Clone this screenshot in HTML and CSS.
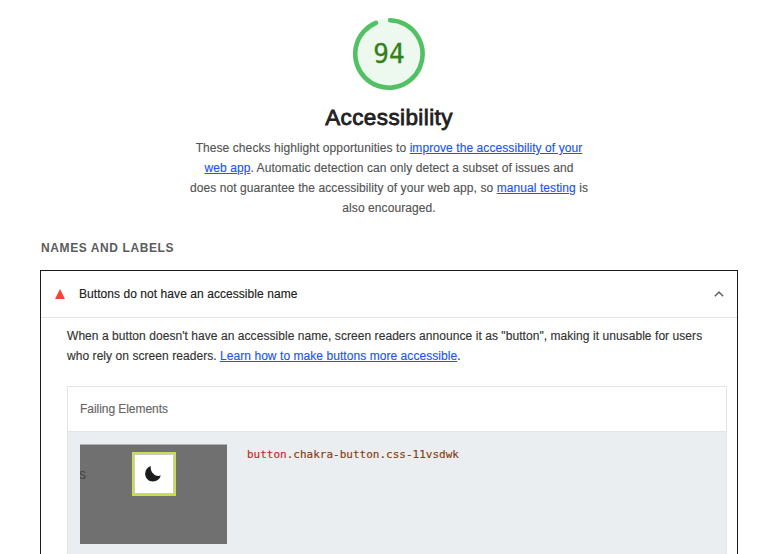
FILE: index.html
```html
<!DOCTYPE html>
<html lang="en">
<head>
<meta charset="utf-8">
<title>Accessibility</title>
<link rel="stylesheet" href="styles.css">
</head>
<body>
<main class="report">
  <header class="category">
    <div class="gauge">
      <svg class="gauge-ring" viewBox="0 0 72 72">
        <circle cx="36" cy="36" r="36" fill="#edf8ef"/>
        <path d="M37.2 2.3A33.7 33.7 0 1 1 22.9 4.9" fill="none" stroke="#51c164" stroke-width="4.6" stroke-linecap="round"/>
      </svg>
      <span class="score">94</span>
    </div>
    <h1 class="title">Accessibility</h1>
    <p class="description">These checks highlight opportunities to <a href="#">improve the accessibility of your<br>web app</a>. Automatic detection can only detect a subset of issues and<br>does not guarantee the accessibility of your web app, so <a href="#">manual testing</a> is<br>also encouraged.</p>
  </header>
  <h2 class="group-title">NAMES AND LABELS</h2>
  <section class="audit">
    <div class="audit-header">
      <svg class="fail-icon" viewBox="0 0 10 10"><path d="M5 0L10 10H0Z" fill="#f14537"/></svg>
      <span class="audit-name">Buttons do not have an accessible name</span>
      <svg class="chevron" viewBox="0 0 10 6"><path d="M.8 5.2L5 1.1L9.2 5.2" fill="none" stroke="#666" stroke-width="1.5"/></svg>
    </div>
    <p class="audit-text">When a button doesn't have an accessible name, screen readers announce it as "button", making it unusable for users<br>who rely on screen readers. <a href="#">Learn how to make buttons more accessible</a>.</p>
    <div class="table">
      <div class="table-head">Failing Elements</div>
      <div class="table-row">
        <div class="thumb">
          <span class="thumb-text">s</span>
          <div class="thumb-target">
            <svg class="moon" viewBox="0 0 16 16"><path d="M5.8 0A8 8 0 0 0 .2 8.5C.7 12.8 4 15.6 8 15.5C11.7 15.4 14.8 13.2 15.8 9.6C12.8 10.6 10.4 9.8 8.4 7.8C6.3 5.7 5.3 2.8 5.8 0Z" fill="#1c1c1c"/></svg>
          </div>
        </div>
        <code class="node"><span class="tag">button</span>.chakra-button.css-11vsdwk</code>
      </div>
    </div>
  </section>
</main>
</body>
</html>
```
FILE: styles.css
```css
* { box-sizing: border-box; }
body {
  margin: 0;
  background: #fff;
  color: #212121;
  font: 12px/20px "Liberation Sans", Arial, sans-serif;
}
a { color: #1a56f0; text-decoration: underline; }
.report { width: 698px; margin-left: 40px; padding-top: 18px; }
.category { display: flex; flex-direction: column; align-items: center; }
.gauge { display: grid; width: 72px; height: 72px; place-items: center; }
.gauge-ring, .score { grid-area: 1 / 1; }
.gauge-ring { width: 72px; height: 72px; }
.score {
  color: #34811b;
  font: 26px/72px "DejaVu Sans Mono", monospace;
  -webkit-text-stroke: 0.3px #34811b;
}
.title {
  margin: 13px 0 0;
  font-size: 22.5px;
  font-weight: 400;
  line-height: 30px;
  letter-spacing: 0.4px;
  white-space: nowrap;
  -webkit-text-stroke: 0.8px #212121;
}
.description {
  margin: 5px 0 0;
  color: #555;
  letter-spacing: 0.08px;
  text-align: center;
  white-space: nowrap;
  -webkit-text-stroke: 0.15px;
}
.group-title {
  margin: 20px 0 0 1px;
  color: #5c5c5c;
  font-size: 12px;
  line-height: 20px;
  letter-spacing: 0.6px;
}
.audit { height: 284px; margin-top: 12px; border: 1px solid #1b1b1b; border-bottom: 0; }
.audit-header {
  display: flex;
  align-items: center;
  height: 47px;
  padding: 0 13px 0 14px;
  border-bottom: 1px solid #e4e4e4;
}
.fail-icon { width: 10px; height: 10px; }
.audit-name { margin-left: 14px; letter-spacing: 0.06px; white-space: nowrap; -webkit-text-stroke: 0.15px; }
.chevron { width: 10px; height: 6px; margin: -1px 0 0 auto; }
.audit-text {
  margin: 8px 0 0 26px;
  color: #333;
  letter-spacing: 0.058px;
  white-space: nowrap;
  -webkit-text-stroke: 0.15px;
}
.table { width: 660px; height: 168px; margin: 20px 0 0 26px; border: 1px solid #e4e4e4; border-bottom: 0; }
.table-head {
  height: 45px;
  padding: 12px;
  border-bottom: 1px solid #e4e4e4;
  color: #666;
  letter-spacing: -0.05px;
  -webkit-text-stroke: 0.15px;
}
.table-row { display: flex; height: 122px; padding: 12px; background: #eaeef1; }
.thumb {
  display: flex;
  position: relative;
  width: 147px;
  height: 100px;
  overflow: hidden;
  border-top: 1px solid #b1b2b3;
  background: #707070;
}
.thumb-text { margin: 19px 0 0 -1px; color: #444; font-size: 14px; }
.thumb-target {
  position: absolute;
  left: 52px;
  top: 7px;
  display: grid;
  place-items: center;
  width: 44px;
  height: 44px;
  border: 2px solid #cddc4e;
  background: #fff;
  box-shadow: inset 0 0 0 1px #c8c8c8;
}
.moon { width: 16px; height: 16px; margin-left: -2px; }
.node {
  margin: 1px 0 0 20px;
  color: #863d0d;
  font: 11px/20px "DejaVu Sans Mono", monospace;
  -webkit-text-stroke: 0.15px;
}
.tag { color: #c8291e; }
```
